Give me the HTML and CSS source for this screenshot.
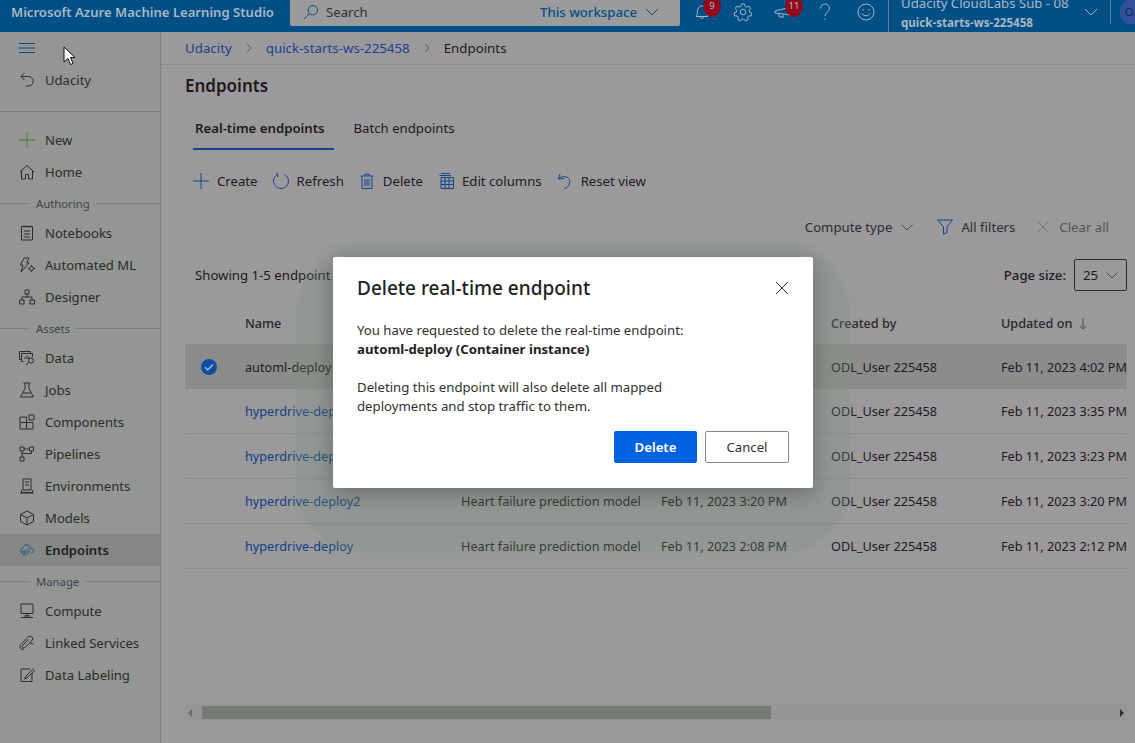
FILE: index.html
```html
<!DOCTYPE html>
<html lang="en">
  <head>
    <meta charset="UTF-8" />
    <title>Endpoints - Azure Machine Learning Studio</title>
    <link rel="stylesheet" href="styles.css">
  </head>
  <body>
    <header class="topbar">
      <div class="brand">Microsoft Azure Machine Learning Studio</div>
      <div class="search">
        <svg class="search-icon" viewBox="0 0 16 16"><circle cx="9.8" cy="6.2" r="4.7"/><path d="M6.4 9.6 1 15"/></svg>
        <span class="search-text">Search</span>
        <span class="search-scope">This workspace</span>
        <svg class="search-chevron" viewBox="0 0 14 8"><path d="M1 1l6 6 6-6"/></svg>
      </div>
      <div class="top-icons">
        <div class="top-icon">
          <svg viewBox="0 0 20 20"><path d="M4 14.5c1.2-1.3 1.4-2.6 1.4-5C5.400 6.500 7.300 4 10 4s4.600 2.500 4.600 5.500c0 2.400.2 3.700 1.400 5zM8.200 14.500c0 2.800 3.600 2.800 3.600 0"/></svg>
          <span class="badge">9</span>
        </div>
        <div class="top-icon">
          <svg viewBox="0 0 20 20"><circle cx="10" cy="10" r="2.800"/><path d="M8.500 2h3l.5 2.400 1.700.8 2.200-1.100 1.800 2.300-1.500 1.900.4 1.800 2.200 1-.7 2.900-2.400-.1-1.200 1.500.5 2.300-2.700 1.200-1.500-1.900h-1.800l-1.500 1.900-2.700-1.200.5-2.300-1.200-1.500-2.400.1-.7-2.900 2.200-1 .4-1.800-1.500-1.900 1.800-2.300 2.200 1.100 1.700-.8z"/></svg>
        </div>
        <div class="top-icon">
          <svg viewBox="0 0 20 20"><path d="M1 9l16-4v8L1 11zM5 12v2.500l4 1V13"/></svg>
          <span class="badge">11</span>
        </div>
        <div class="top-icon">
          <svg viewBox="0 0 20 20"><path d="M5.500 6.500C5.500 3.800 7.500 2 10 2s4.500 1.800 4.500 4.300c0 3.500-4.500 3.700-4.500 7.700"/><path d="M10 16.500v1.500"/></svg>
        </div>
        <div class="top-icon">
          <svg viewBox="0 0 20 20"><circle cx="10" cy="10" r="8"/><path d="M6 11.500c1.800 3 6.200 3 8 0M7 7v1.500M13 7v1.500"/></svg>
        </div>
      </div>
      <div class="account">
        <div class="account-sub">Udacity CloudLabs Sub - 08</div>
        <div class="account-ws">quick-starts-ws-225458</div>
      </div>
      <svg class="account-chevron" viewBox="0 0 14 8"><path d="M1 1l6 6 6-6"/></svg>
      <div class="avatar">OZ</div>
    </header>

    <div class="layout">
      <nav class="sidebar">
        <div class="nav-burger">
          <svg viewBox="0 0 16 10"><path d="M0 .5h16M0 5h16M0 9.500h16"/></svg>
        </div>
        <div class="nav-item">
          <svg viewBox="0 0 16 16"><path d="M5.500 1 2 4.500 5.500 8M2 4.500h7.500a4.500 4.500 0 0 1 0 9.500H7"/></svg>Udacity
        </div>
        <div class="nav-rule"></div>
        <div class="nav-item">
          <svg class="plus-green" viewBox="0 0 16 16"><path d="M8 0v16M0 8h16"/></svg>New
        </div>
        <div class="nav-item">
          <svg viewBox="0 0 16 16"><path d="M.8 8 8 1.500 15.200 8M2.500 6.500V15h4v-4.500h3V15h4V6.500"/></svg>Home
        </div>
        <div class="nav-section"><span>Authoring</span></div>
        <div class="nav-item">
          <svg viewBox="0 0 16 16"><path d="M2.500 1.500h11V15h-11zM5 .5v2M8 .5v2M11 .5v2M5 6h6M5 9h6M5 12h6"/></svg>Notebooks
        </div>
        <div class="nav-item">
          <svg viewBox="0 0 16 16"><path d="M5 1h5L7.500 6H10L2 15l2-7H1.500z"/><circle cx="12.500" cy="11.500" r="2"/><path d="M12.500 8v1.500M12.500 13.500V15M9 11.500h1.500M14.500 11.500H16"/></svg>Automated ML
        </div>
        <div class="nav-item">
          <svg viewBox="0 0 16 16"><path d="M6 1h4v4H6zM.5 11h4.500v4H.5zM11 11h4.500v4H11zM8 5v3M3 11V8h10v3"/></svg>Designer
        </div>
        <div class="nav-section"><span>Assets</span></div>
        <div class="nav-item">
          <svg viewBox="0 0 16 16"><path d="M2.500 9.500H.5v-8h11v1.500M2.500 3.500h11V7M4.500 11.500H2.500v-8M6 9V7M8 9V5.500M10 9V6.500"/><circle cx="12" cy="10.500" r="2.500"/><path d="M10 12.500 7 15"/></svg>Data
        </div>
        <div class="nav-item">
          <svg viewBox="0 0 16 16"><path d="M4.500 1h7M6 1v5.500L1.500 15h13L10 6.500V1M4 11h8"/></svg>Jobs
        </div>
        <div class="nav-item">
          <svg viewBox="0 0 16 16"><path d="M1 3h6.500v5.500H1zM1 8.500h6.500V15H1zM7.500 8.500H14V15H7.500zM10 1h5v5h-5z"/></svg>Components
        </div>
        <div class="nav-item">
          <svg viewBox="0 0 16 16"><path d="M1 1h4v4H1zM10.500 1h4v4h-4zM1 11h4v4H1zM5 3h5.500M3 5v6M12.500 5v2.500H3"/></svg>Pipelines
        </div>
        <div class="nav-item">
          <svg viewBox="0 0 16 16"><path d="M4 1h8v11H4zM6 4h4M6 7h4M2.500 12v2.500h11V12M1 15h14"/></svg>Environments
        </div>
        <div class="nav-item">
          <svg viewBox="0 0 16 16"><path d="M8 1l6.500 3.500v7L8 15l-6.500-3.500v-7zM1.500 4.500 8 8l6.500-3.500M8 8v7"/></svg>Models
        </div>
        <div class="nav-item nav-active">
          <svg class="cloud-blue" viewBox="0 0 18 16"><path d="M4.500 11.500C1 11.500.5 7 4 6.500 4.500 3 7.500 1.500 10 2.500c2 .8 2.500 2.500 2.700 3.500 4-.2 5 5 1 5.500"/><circle cx="7" cy="10" r="1.300"/><path d="M2.500 10h3M9 6.500c2.500.5 3 5-.5 6.500-2 .8-3.500.5-4.500-.5"/></svg>Endpoints
        </div>
        <div class="nav-section"><span>Manage</span></div>
        <div class="nav-item">
          <svg viewBox="0 0 16 16"><path d="M2 1h12v9.500H2zM8 10.500V13M2 14.500h12M5 13h6"/></svg>Compute
        </div>
        <div class="nav-item">
          <svg viewBox="0 0 16 16"><path d="M1.500 13c-1.500-1.500 0-3.500 1-4l6-6.500c1.500-1.500 3.500-1.500 4.500-.5s1 2.500-.5 4l-6 6c-1 1-2.500 1-3 .5s-.5-1.500.5-2.500l5.500-5.500M1.500 13c.5 1.500 2.500 1.800 3.500.8M11 8l3.500 1"/></svg>Linked Services
        </div>
        <div class="nav-item">
          <svg viewBox="0 0 16 16"><path d="M11 2H2v12.500h11V6M14.500 1.500 7 9l-1.500 3 3-1.500L16 3"/></svg>Data Labeling
        </div>
      </nav>

      <main class="content">
        <div class="crumbs">
          <a>Udacity</a>
          <svg class="crumb-sep" viewBox="0 0 6 10"><path d="M1 1l4 4-4 4"/></svg>
          <a>quick-starts-ws-225458</a>
          <svg class="crumb-sep" viewBox="0 0 6 10"><path d="M1 1l4 4-4 4"/></svg>
          <span>Endpoints</span>
        </div>

        <div class="page">
          <h1>Endpoints</h1>
          <div class="tabs">
            <div class="tab tab-on">Real-time endpoints</div>
            <div class="tab">Batch endpoints</div>
          </div>

          <div class="toolbar">
            <div class="tool">
              <svg viewBox="0 0 16 16"><path d="M8 0v16M0 8h16"/></svg>Create
            </div>
            <div class="tool">
              <svg viewBox="0 0 16 16"><path d="M5 1.500C1.500 3 0 6 .6 9.200 1.400 13 4.500 15.500 8 15.500s6.800-2.500 7.400-6.300C16 5.500 14 3 11.500 1.500M5 1.500 3 .5M5 1.500 4.500 4"/></svg>Refresh
            </div>
            <div class="tool">
              <svg viewBox="0 0 14 16"><path d="M.5 3h13M5 3V1h4v2M2 3v12.500h10V3M5 6v7M7 6v7M9 6v7"/></svg>Delete
            </div>
            <div class="tool">
              <svg class="wide" viewBox="0 0 16 16"><path d="M3 .5h9M1.500 2.500H13M3 4.500h12.500v11H3zM3 8h12.500M3 11.500h12.500M7 4.500v11M11 4.500v11"/></svg>Edit columns
            </div>
            <div class="tool">
              <svg viewBox="0 0 16 16"><path d="M3 1 1.500 6 7 5.500M1.500 6c2-2.500 6-3 9-1.500 3.500 2 3 6.500-.5 10l-3 1"/></svg>Reset view
            </div>
          </div>

          <div class="filters">
            <span class="filter">Compute type</span>
            <svg class="filter-chevron" viewBox="0 0 12 7"><path d="M.5.5 6 6 11.500.5"/></svg>
            <svg class="funnel" viewBox="0 0 16 16"><path d="M.5 1h15L10 8v5.500L6.500 15V8z"/></svg>
            <span class="filter">All filters</span>
            <svg class="clear-x" viewBox="0 0 12 12"><path d="M.5.5l11 11M11.500.5l-11 11"/></svg>
            <span class="filter filter-off">Clear all</span>
          </div>

          <div class="summary">
            <span class="summary-text">Showing 1-5 endpoint</span>
            <div class="pager">
              <span class="pager-label">Page size:</span>
              <div class="pager-box">25
                <svg viewBox="0 0 12 7"><path d="M.5.5 6 6 11.500.5"/></svg>
              </div>
            </div>
          </div>

          <div class="table">
            <div class="tr th">
              <div></div>
              <div>Name</div>
              <div></div>
              <div></div>
              <div>Created by</div>
              <div class="th-sort">Updated on
                <svg viewBox="0 0 8 12"><path d="M4 0v11M1 8l3 3 3-3"/></svg>
              </div>
            </div>
            <div class="tr tr-on">
              <div class="check">
                <svg viewBox="0 0 16 16"><circle cx="8" cy="8" r="8"/><path d="M4 8.300l2.700 2.700L12 5.500"/></svg>
              </div>
              <div>automl-deploy</div>
              <div></div>
              <div></div>
              <div>ODL_User 225458</div>
              <div>Feb 11, 2023 4:02 PM</div>
            </div>
            <div class="tr">
              <div></div>
              <div class="link">hyperdrive-dep</div>
              <div></div>
              <div></div>
              <div>ODL_User 225458</div>
              <div>Feb 11, 2023 3:35 PM</div>
            </div>
            <div class="tr">
              <div></div>
              <div class="link">hyperdrive-dep</div>
              <div></div>
              <div></div>
              <div>ODL_User 225458</div>
              <div>Feb 11, 2023 3:23 PM</div>
            </div>
            <div class="tr">
              <div></div>
              <div class="link">hyperdrive-deploy2</div>
              <div>Heart failure prediction model</div>
              <div>Feb 11, 2023 3:20 PM</div>
              <div>ODL_User 225458</div>
              <div>Feb 11, 2023 3:20 PM</div>
            </div>
            <div class="tr">
              <div></div>
              <div class="link">hyperdrive-deploy</div>
              <div>Heart failure prediction model</div>
              <div>Feb 11, 2023 2:08 PM</div>
              <div>ODL_User 225458</div>
              <div>Feb 11, 2023 2:12 PM</div>
            </div>
          </div>

          <div class="hscroll">
            <span class="arrow-l"></span>
            <div class="hscroll-thumb"></div>
            <span class="arrow-r"></span>
          </div>
        </div>
      </main>
    </div>

    <!-- things sitting over the page -->
    <svg class="cursor" viewBox="0 0 13 20"><path d="M1 1v15l4-3.500 2.500 6 2.500-1-2.500-6H12z"/></svg>
    <div class="halo"></div>
    <div class="dialog">
      <div class="dialog-head">
        <h2>Delete real-time endpoint</h2>
        <svg viewBox="0 0 14 14"><path d="M1 1l12 12M13 1 1 13"/></svg>
      </div>
      <p class="dialog-line">You have requested to delete the real-time endpoint:</p>
      <p class="dialog-line dialog-name">automl-deploy (Container instance)</p>
      <p class="dialog-line dialog-gap">Deleting this endpoint will also delete all mapped deployments and stop traffic to them.</p>
      <div class="dialog-btns">
        <button type="button" class="btn-primary">Delete</button>
        <button type="button" class="btn-plain">Cancel</button>
      </div>
    </div>
  </body>
</html>
```

FILE: styles.css
```css
* {
  box-sizing: border-box;
}
html,
body {
  margin: 0;
  height: 743px;
  overflow: hidden;
}
body {
  font-family: "Noto Sans", "Open Sans", sans-serif;
  font-size: 13.2px;
  color: #1d1b1d;
  background-color: #9b999b;
}
svg {
  fill: none;
  stroke: currentColor;
  stroke-width: 1;
  flex-shrink: 0;
}

/* Top bar */
.topbar {
  display: flex;
  align-items: flex-start;
  height: 32px;
  background-color: #004f86;
  color: #a9b7c3;
  overflow: hidden;
}
.brand {
  width: 290px;
  padding-left: 11px;
  line-height: 25px;
  font-size: 13.1px;
  font-weight: 600;
  white-space: nowrap;
}
.search {
  display: flex;
  align-items: center;
  width: 390px;
  height: 26px;
  padding-left: 13px;
  padding-bottom: 2px;
  background-color: #9b9a9c;
  border-radius: 0 0 2px 2px;
  color: #1f2a33;
}
.search-icon {
  width: 16px;
  height: 16px;
  color: #124a80;
}
.search-text {
  margin-left: 7px;
  color: #333;
}
.search-scope {
  margin-left: auto;
  color: #004f86;
  font-weight: 500;
}
.search-chevron {
  width: 14px;
  height: 8px;
  margin: 0 21px 0 8px;
  color: #004f86;
}
.top-icons {
  display: flex;
  margin-left: 1px;
}
.top-icon {
  position: relative;
  display: flex;
  justify-content: center;
  align-items: center;
  width: 41px;
  height: 24px;
}
.top-icon svg {
  width: 20px;
  height: 20px;
}
.badge {
  position: absolute;
  top: -3px;
  left: 22px;
  width: 18px;
  height: 20px;
  border-radius: 50% 50% 50% 50% / 40% 40% 60% 60%;
  background-color: #8e0c1f;
  color: #c9b6b8;
  font-size: 9.5px;
  line-height: 17px;
  text-align: center;
}
.account {
  align-self: flex-end;
  width: 189px;
  height: 38px;
  margin-left: 2px;
  padding-left: 12px;
  border-left: 1px solid #5f7f9a;
  line-height: 19px;
  white-space: nowrap;
  flex-shrink: 0;
}
.account-ws {
  font-size: 11.6px;
  font-weight: 700;
}
.account-chevron {
  width: 14px;
  height: 8px;
  margin: 8px 0 0 7px;
}
.avatar {
  width: 25px;
  height: 24px;
  margin-left: 12px;
  padding-left: 14px;
  border-left: 1px solid #5f7f9a;
  flex-shrink: 0;
  color: #0d2a5a;
  font-size: 11px;
  line-height: 24px;
  background: radial-gradient(circle at 22px 12px, #33509a 13px, transparent 13.5px);
  overflow: hidden;
}

/* Sidebar */
.layout {
  display: flex;
  height: 711px;
}
.sidebar {
  width: 161px;
  background-color: #939692;
  border-right: 1px solid #7f817f;
  flex-shrink: 0;
  color: #2b2c2b;
  font-size: 13.1px;
}
.nav-burger {
  display: flex;
  align-items: center;
  height: 32px;
  padding-left: 19px;
  color: #12468a;
}
.nav-burger svg {
  width: 16px;
  height: 10px;
}
.nav-item {
  display: flex;
  align-items: center;
  gap: 10px;
  height: 32px;
  padding-left: 19px;
  white-space: nowrap;
}
.nav-item svg {
  width: 16px;
  height: 16px;
}
.nav-rule {
  height: 1px;
  margin: 15px 0 12px;
  background-color: #7f817f;
}
.nav-section {
  display: flex;
  align-items: center;
  height: 29px;
  padding-top: 2px;
  font-size: 11.3px;
  color: #3c4550;
}
.nav-section::before {
  content: "";
  width: 30px;
  height: 1px;
  margin-right: 6px;
  background-color: #7f817f;
}
.nav-section::after {
  content: "";
  flex: 1;
  height: 1px;
  margin-left: 6px;
  background-color: #7f817f;
}
.nav-active {
  background-color: #858885;
  font-weight: 600;
  color: #1f201f;
}
.plus-green {
  color: #4d7a2a;
}
.cloud-blue {
  color: #134f8c;
}

/* Main */
.content {
  flex: 1;
  min-width: 0;
}
.crumbs {
  display: flex;
  align-items: center;
  gap: 14px;
  height: 33px;
  padding-left: 24px;
  border-bottom: 1px solid #8c8b8c;
  font-size: 13.3px;
}
.crumbs a {
  color: #1c3f8e;
}
.crumb-sep {
  width: 6px;
  height: 10px;
  color: #5c5a5c;
}
.page {
  padding: 0 8px 0 24px;
}
h1 {
  margin: 0;
  padding-top: 8px;
  font-size: 17px;
  font-weight: 600;
  line-height: 26px;
}
.tabs {
  display: flex;
  gap: 10px;
  margin: 15px 0 0 8px;
}
.tab {
  padding: 0 10px;
  height: 36px;
  line-height: 28px;
  white-space: nowrap;
}
.tab-on {
  padding: 0 9px 0 2px;
  font-weight: 600;
  border-bottom: 2px solid #12468a;
}
.toolbar {
  display: flex;
  gap: 15px;
  height: 32px;
  margin: 15px 0 0 8px;
}
.tool {
  display: flex;
  align-items: center;
  gap: 8px;
  white-space: nowrap;
}
.tool svg {
  width: 16px;
  height: 16px;
  color: #12468a;
}
.filters {
  display: flex;
  align-items: center;
  justify-content: flex-end;
  height: 32px;
  margin-top: 14px;
  padding-right: 18px;
  color: #2e2c2e;
}
.filter-chevron {
  width: 12px;
  height: 7px;
  margin: 0 24px 0 9px;
  color: #4a4a4c;
}
.funnel {
  width: 16px;
  height: 16px;
  margin-right: 8px;
  color: #12468a;
}
.clear-x {
  width: 12px;
  height: 12px;
  margin: 0 10px 0 22px;
  color: #777;
}
.filter-off {
  color: #555;
}
.summary {
  display: flex;
  align-items: center;
  justify-content: space-between;
  height: 32px;
  margin-top: 16px;
}
.summary-text {
  padding-left: 10px;
}
.pager {
  display: flex;
  align-items: center;
  gap: 8px;
}
.pager-label {
  font-weight: 500;
}
.pager-box {
  display: flex;
  align-items: center;
  justify-content: space-between;
  width: 53px;
  height: 32px;
  padding: 0 8px;
  border: 1px solid #2e2c2e;
  border-radius: 2px;
}
.pager-box svg {
  width: 12px;
  height: 7px;
  color: #4a4a4c;
}
.table {
  margin-top: 16px;
  overflow: hidden;
  font-size: 12.7px;
}
.tr {
  display: grid;
  grid-template-columns: 60px 216px 200px 170px 170px 200px;
  align-items: center;
  width: 1016px;
  height: 45px;
  border-bottom: 1px solid #8c8b8c;
  white-space: nowrap;
}
.tr > div {
  overflow: hidden;
}
.th {
  height: 38px;
  padding-bottom: 6px;
  font-weight: 500;
  color: #2a282a;
}
.tr-on {
  height: 44px;
  background-color: #8d8c8d;
}
.th-sort svg {
  width: 8px;
  height: 12px;
  margin-left: 3px;
  vertical-align: -2px;
  color: #4a4a4c;
}
.link {
  color: #0f3f85;
}
.check {
  display: flex;
  justify-content: center;
  width: 48px;
}
.check svg {
  width: 16px;
  height: 16px;
  fill: #0d4ea0;
  stroke: none;
}
.check svg path {
  fill: none;
  stroke: #a9b4c6;
  stroke-width: 1.5;
}
.hscroll {
  display: flex;
  align-items: center;
  height: 17px;
  margin-top: 135px;
  padding: 0 3px;
  background-color: #979597;
}
.hscroll-thumb {
  width: 569px;
  height: 13px;
  margin-left: 10px;
  background-color: #767a74;
}
.arrow-l,
.arrow-r {
  width: 0;
  height: 0;
  border-top: 4px solid transparent;
  border-bottom: 4px solid transparent;
}
.arrow-l {
  border-right: 4px solid #6b6b6d;
}
.arrow-r {
  margin-left: auto;
  border-left: 4px solid #2e2e30;
}

/* Overlay items */
.cursor {
  position: absolute;
  top: 46px;
  left: 63px;
  width: 13px;
  height: 20px;
  fill: #fff;
  stroke: #111;
}
.halo {
  position: absolute;
  top: 245px;
  left: 296px;
  width: 554px;
  height: 308px;
  border-radius: 70px;
  background-color: rgba(125, 148, 125, 0.25);
  box-shadow: 0 0 0 6px rgba(125, 148, 125, 0.08);
}
.dialog {
  position: absolute;
  top: 257px;
  left: 333px;
  width: 480px;
  height: 231px;
  padding: 16px 24px;
  background-color: #fff;
  border-radius: 2px;
  box-shadow: 0 6px 22px rgba(0, 0, 0, 0.28);
  color: #323130;
}
.dialog-head {
  display: flex;
  align-items: center;
  justify-content: space-between;
  height: 30px;
}
.dialog-head svg {
  width: 14px;
  height: 14px;
  color: #333;
}
h2 {
  margin: 0;
  font-size: 19px;
  font-weight: 500;
  color: #201f1e;
}
.dialog-line {
  margin: 0;
  width: 350px;
  line-height: 19px;
  white-space: normal;
}
.dialog-head + .dialog-line {
  margin-top: 18px;
  width: auto;
}
.dialog-name {
  width: auto;
  font-weight: 700;
  color: #201f1e;
}
.dialog-gap {
  margin-top: 19px;
}
.dialog-btns {
  display: flex;
  justify-content: flex-end;
  gap: 8px;
  margin-top: 15px;
}
button {
  height: 32px;
  font-family: inherit;
  font-size: 13.2px;
  border-radius: 2px;
  cursor: pointer;
}
.btn-primary {
  width: 83px;
  border: none;
  background-color: #0062e1;
  color: #fff;
  font-weight: 600;
}
.btn-plain {
  width: 84px;
  border: 1px solid #8a8886;
  background-color: #fff;
  color: #323130;
}
```
